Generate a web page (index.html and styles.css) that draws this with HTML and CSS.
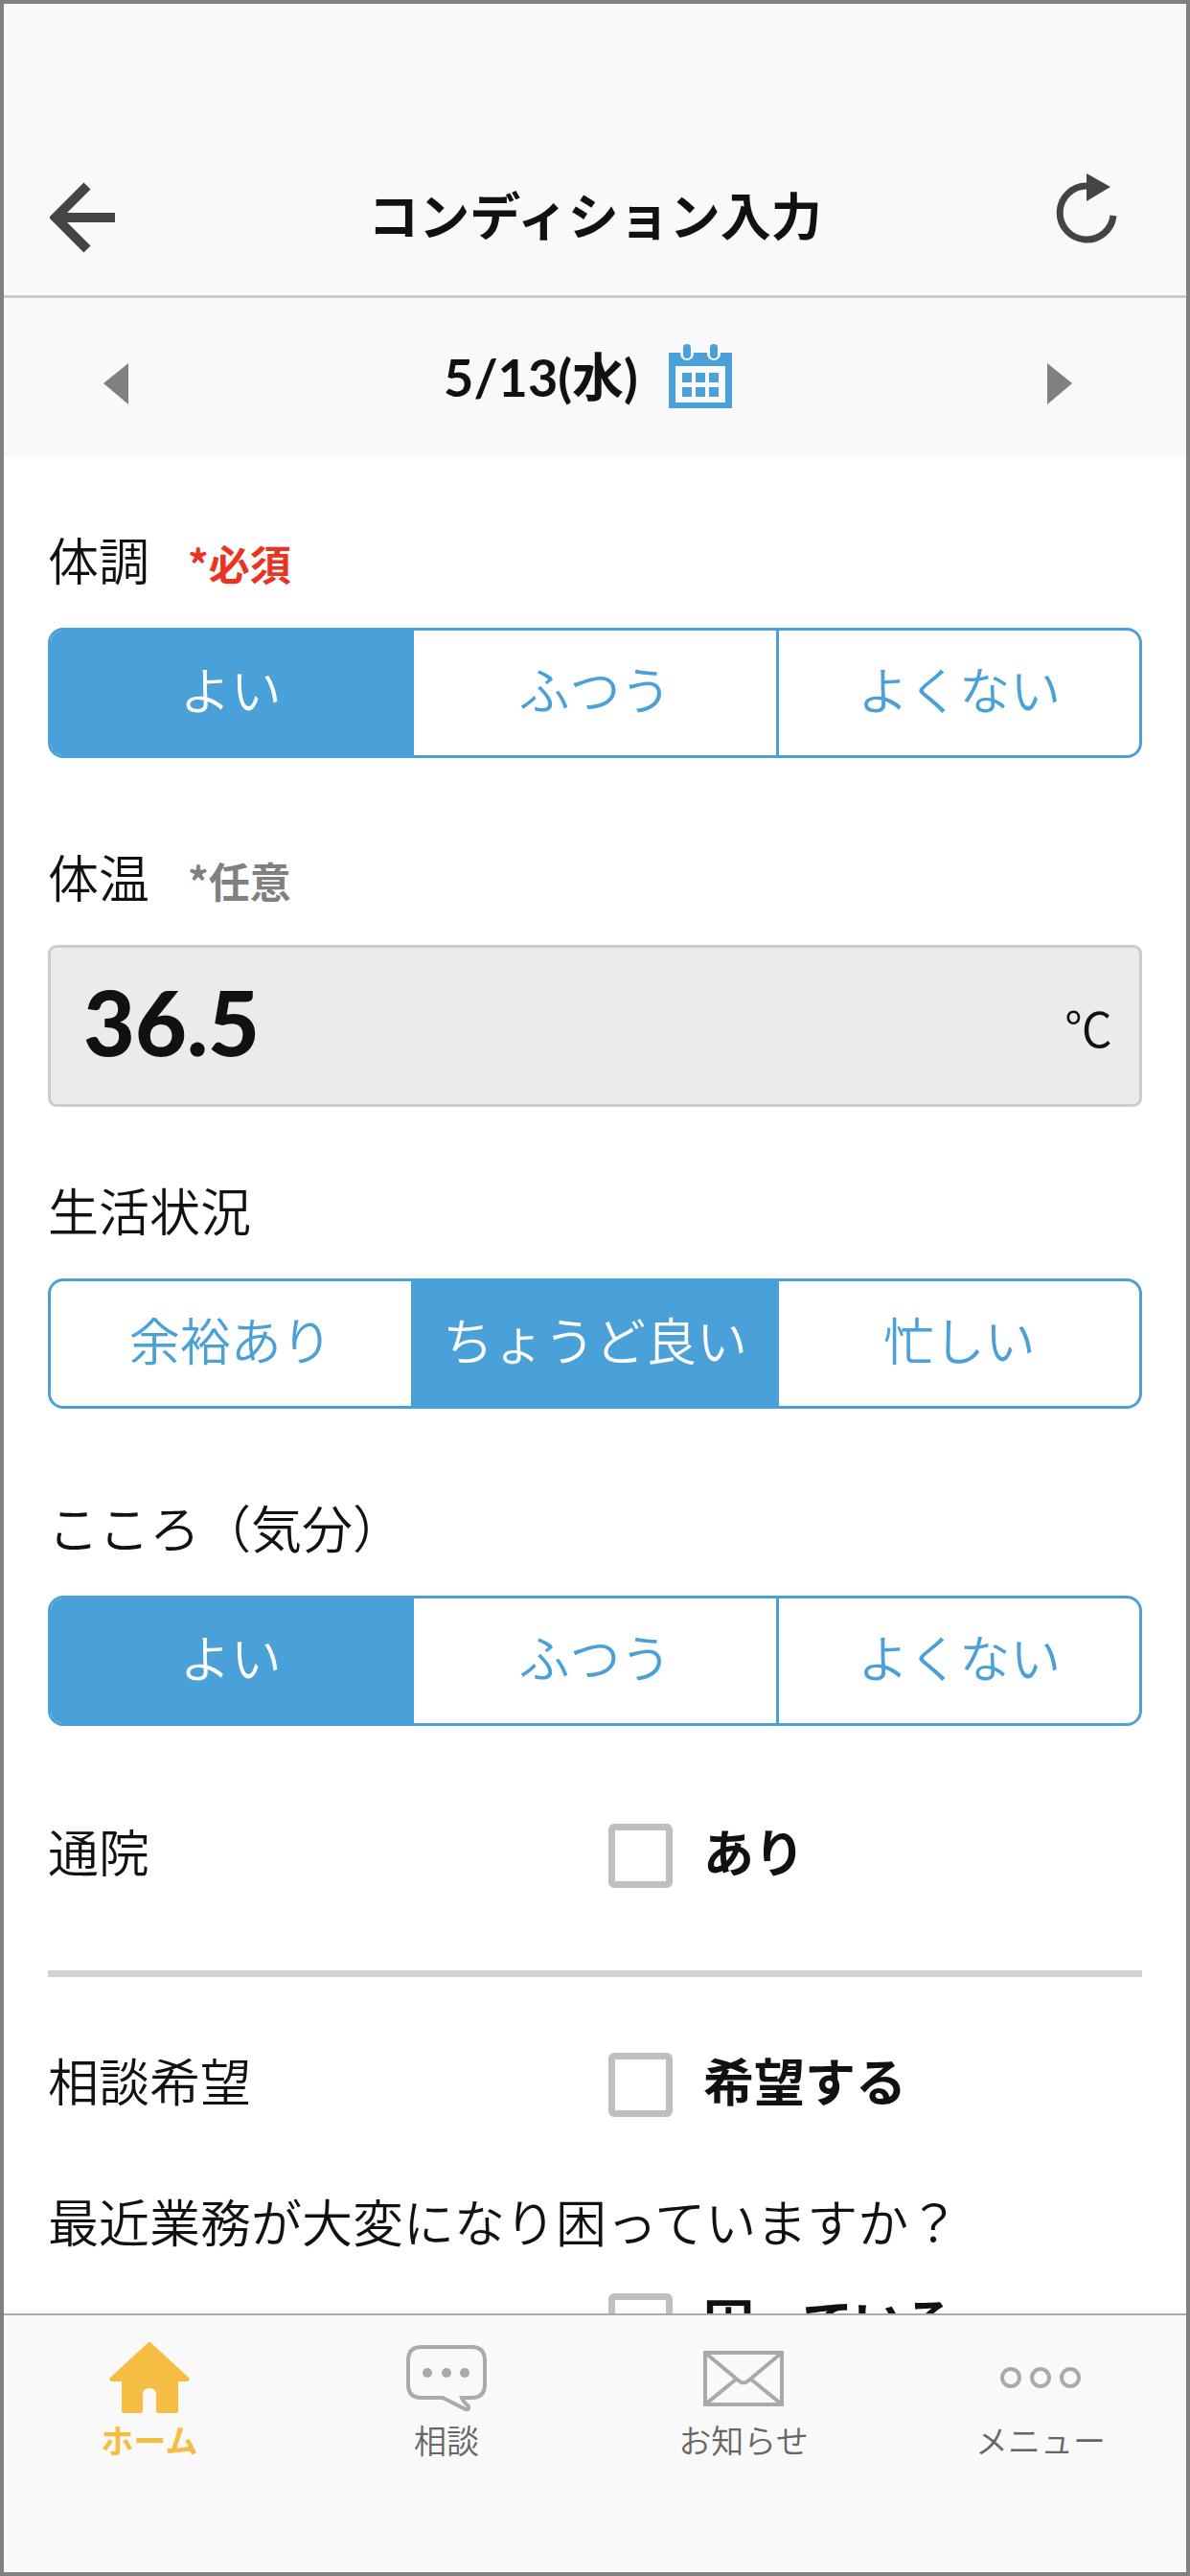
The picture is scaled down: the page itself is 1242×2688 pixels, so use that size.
FILE: index.html
```html
<!DOCTYPE html>
<html lang="ja">
<head>
  <meta charset="UTF-8">
  <meta name="viewport" content="width=device-width, initial-scale=1.0">
  <title>コンディション入力</title>
  <link rel="stylesheet" href="styles.css">
</head>
<body>
  <!-- ヘッダー -->
  <header class="header">
    <button type="button" class="icon-btn" aria-label="戻る">
      <svg width="68" height="74" viewBox="0 0 68 74">
        <path d="M39 4 L6 37 L39 70 M7 37 H68" fill="none" stroke="#444" stroke-width="10"/>
      </svg>
    </button>
    <h1>コンディション入力</h1>
    <button type="button" class="icon-btn reload" aria-label="更新">
      <svg width="64" height="92" viewBox="0 0 64 92">
        <path d="M32 13 A28 28 0 1 0 60 44" fill="none" stroke="#444" stroke-width="7"/>
        <path d="M32 0 L57 14 L32 29 Z" fill="#444"/>
      </svg>
    </button>
  </header>

  <!-- 日付 -->
  <div class="date-bar">
    <button type="button" class="icon-btn" aria-label="前の日">
      <svg width="26" height="56" viewBox="0 0 26 56"><path d="M26 13 V56 L0 34 Z" fill="#808080"/></svg>
    </button>
    <div class="date">
      <span>5/13(水)</span>
      <button type="button" class="icon-btn" aria-label="カレンダー">
        <svg width="66" height="70" viewBox="0 0 66 70">
          <path d="M0 9 H66 V67 H0 Z M7 23 V61 H59 V23 Z" fill="#4aa0d8" fill-rule="evenodd"/>
          <rect x="12" y="-3" width="14" height="20" rx="7" fill="#f9f9f9"/>
          <rect x="40" y="-3" width="14" height="20" rx="7" fill="#f9f9f9"/>
          <rect x="15" y="0" width="8" height="15" rx="4" fill="#4aa0d8"/>
          <rect x="43" y="0" width="8" height="15" rx="4" fill="#4aa0d8"/>
          <path d="M14 30h10v10h-10z M28 30h10v10h-10z M42 30h10v10h-10z M14 45h10v10h-10z M28 45h10v10h-10z M42 45h10v10h-10z" fill="#4aa0d8"/>
        </svg>
      </button>
    </div>
    <button type="button" class="icon-btn" aria-label="次の日">
      <svg width="26" height="56" viewBox="0 0 26 56"><path d="M0 13 V56 L26 34 Z" fill="#808080"/></svg>
    </button>
  </div>

  <!-- 入力フォーム -->
  <main class="form">
    <fieldset>
      <legend>体調<span class="note required">*必須</span></legend>
      <div class="segment">
        <label><input type="radio" name="health" checked><span>よい</span></label>
        <label><input type="radio" name="health"><span>ふつう</span></label>
        <label><input type="radio" name="health"><span>よくない</span></label>
      </div>
    </fieldset>

    <div class="group">
      <label class="title" for="temp">体温<span class="note">*任意</span></label>
      <div class="temp">
        <input type="text" id="temp" inputmode="decimal" value="36.5">
        <span class="unit">℃</span>
      </div>
    </div>

    <fieldset>
      <legend>生活状況</legend>
      <div class="segment">
        <label><input type="radio" name="life"><span>余裕あり</span></label>
        <label><input type="radio" name="life" checked><span>ちょうど良い</span></label>
        <label><input type="radio" name="life"><span>忙しい</span></label>
      </div>
    </fieldset>

    <fieldset>
      <legend>こころ（気分）</legend>
      <div class="segment">
        <label><input type="radio" name="mood" checked><span>よい</span></label>
        <label><input type="radio" name="mood"><span>ふつう</span></label>
        <label><input type="radio" name="mood"><span>よくない</span></label>
      </div>
    </fieldset>

    <div class="row">
      <span>通院</span>
      <label class="check"><input type="checkbox"><span>あり</span></label>
    </div>
    <hr>
    <div class="row">
      <span>相談希望</span>
      <label class="check"><input type="checkbox"><span>希望する</span></label>
    </div>

    <p class="question">最近業務が大変になり困っていますか？</p>
    <div class="row">
      <span></span>
      <label class="check"><input type="checkbox"><span>困っている</span></label>
    </div>
  </main>

  <!-- 下部メニュー -->
  <nav class="tabs">
    <a href="#" class="active">
      <svg width="84" height="76" viewBox="0 0 84 76">
        <path d="M40 2 Q42 0 44 2 L83 38 Q85 42 81 42 H72 V73 Q72 75 70 75 H51 Q49 75 49 73 V56 Q49 49 42 49 Q35 49 35 56 V73 Q35 75 33 75 H15 Q13 75 13 73 V42 H3 Q-1 42 1 38 Z" fill="#f5bd41"/>
      </svg>
      <span>ホーム</span>
    </a>
    <a href="#">
      <svg width="84" height="76" viewBox="0 0 84 76">
        <path d="M16 6 H68 Q82 6 82 20 V45 Q82 59 68 59 H58 Q60 64 65 68 Q66 72 62 71 L38 59 H16 Q2 59 2 45 V20 Q2 6 16 6 Z" fill="none" stroke="#aaa" stroke-width="4"/>
        <circle cx="22" cy="33" r="5" fill="#aaa"/>
        <circle cx="42" cy="33" r="5" fill="#aaa"/>
        <circle cx="61" cy="33" r="5" fill="#aaa"/>
      </svg>
      <span>相談</span>
    </a>
    <a href="#">
      <svg width="84" height="76" viewBox="0 0 84 76">
        <path d="M2 12 H82 V66 H2 Z M2 12 L38 42 Q42 45 46 42 L82 12 M2 66 L35 39 M82 66 L49 39" fill="none" stroke="#aaa" stroke-width="4"/>
      </svg>
      <span>お知らせ</span>
    </a>
    <a href="#">
      <svg width="84" height="76" viewBox="0 0 84 76">
        <g fill="none" stroke="#aaa" stroke-width="4">
          <circle cx="11" cy="38" r="9"/>
          <circle cx="42" cy="38" r="9"/>
          <circle cx="73" cy="38" r="9"/>
        </g>
      </svg>
      <span>メニュー</span>
    </a>
  </nav>
</body>
</html>
```
FILE: styles.css
```css
* {
  box-sizing: border-box;
}

body {
  margin: 0;
  height: 100vh;
  display: flex;
  flex-direction: column;
  border: 4px solid #808080;
  background-color: #fff;
  color: #111;
  font-family: "Noto Sans CJK JP", sans-serif;
  font-size: 53px;
  font-weight: 350;
  line-height: 56px;
}

input {
  font-family: inherit;
  margin: 0;
}

svg {
  display: block;
}

.icon-btn {
  padding: 0;
  border: none;
  background: none;
  cursor: pointer;
}

/* ヘッダー */
.header {
  display: grid;
  grid-template-columns: 1fr auto 1fr;
  align-items: center;
  justify-items: start;
  padding: 177px 48px 35px;
  border-bottom: 3px solid #ccc;
  background-color: #f9f9f9;
}

.header h1 {
  margin: 0;
  padding-bottom: 8px;
  font-size: 53px;
  font-weight: bold;
}

.reload {
  justify-self: end;
  margin-right: 24px;
}

/* 日付 */
.date-bar {
  display: flex;
  justify-content: space-between;
  align-items: center;
  padding: 48px 119px 48px 104px;
  background-color: #f9f9f9;
}

.date {
  display: flex;
  align-items: center;
  gap: 32px;
  font-family: Lato, "Noto Sans CJK JP", sans-serif;
  font-size: 54px;
  font-weight: bold;
}

/* 入力フォーム */
.form {
  flex: 1;
  min-height: 0;
  overflow: hidden;
  padding: 78px 46px 0;
}

fieldset {
  margin: 0 0 95px;
  padding: 0;
  border: none;
}

legend,
.title {
  display: block;
  margin-bottom: 44px;
  padding: 0;
}

.note {
  margin-left: 40px;
  color: #808080;
  font-size: 43px;
  font-weight: bold;
  line-height: 40px;
}

.required {
  color: #eb3323;
}

.segment {
  display: grid;
  grid-template-columns: repeat(3, 1fr);
  overflow: hidden;
  border: 3px solid #4aa0d8;
  border-radius: 16px;
  color: #4aa0d8;
}

.segment label {
  position: relative;
  text-align: center;
  cursor: pointer;
}

.segment label:first-child {
  border-right: 3px solid #4aa0d8;
}

.segment label:last-child {
  border-left: 3px solid #4aa0d8;
}

.segment input {
  position: absolute;
  opacity: 0;
}

.segment span {
  display: block;
  padding: 32px 0 42px;
}

.segment input:checked + span {
  background-color: #4aa0d8;
  color: #fff;
}

.group {
  margin-bottom: 79px;
}

.temp {
  display: flex;
  align-items: center;
  padding: 0 28px 0 34px;
  border: 3px solid #ccc;
  border-radius: 9px;
  background-color: #ebebeb;
}

.temp input {
  flex: 1;
  min-width: 0;
  height: 163px;
  padding: 0 0 10px;
  border: none;
  background: none;
  color: #111;
  font-family: Lato, sans-serif;
  font-size: 93px;
  font-weight: 900;
}

.unit {
  font-size: 50px;
}

.row {
  display: grid;
  grid-template-columns: calc(50% + 14px) 1fr;
  align-items: center;
}

.row span {
  padding-bottom: 11px;
}

fieldset + .row {
  margin-top: 102px;
}

.check {
  display: flex;
  align-items: center;
  gap: 32px;
  font-weight: bold;
}

.check input {
  appearance: none;
  width: 67px;
  height: 67px;
  border: 7px solid #bfbfbf;
  border-radius: 6px;
  background-color: #fff;
}

.check input:checked {
  background-color: #4aa0d8;
}

hr {
  height: 7px;
  margin: 86px 0 79px;
  border: none;
  background-color: #d2d2d2;
}

.question {
  margin: 80px 0 48px;
}

/* 下部メニュー */
.tabs {
  display: grid;
  grid-template-columns: repeat(4, 1fr);
  column-gap: 6px;
  padding: 27px 0 118px;
  border-top: 2px solid #aaa;
  background-color: #f9f9f9;
}

.tabs a {
  display: flex;
  flex-direction: column;
  align-items: center;
  gap: 7px;
  color: #666;
  font-size: 34px;
  line-height: 40px;
  text-decoration: none;
}

.tabs .active {
  color: #f5bd41;
  font-weight: bold;
}
```
